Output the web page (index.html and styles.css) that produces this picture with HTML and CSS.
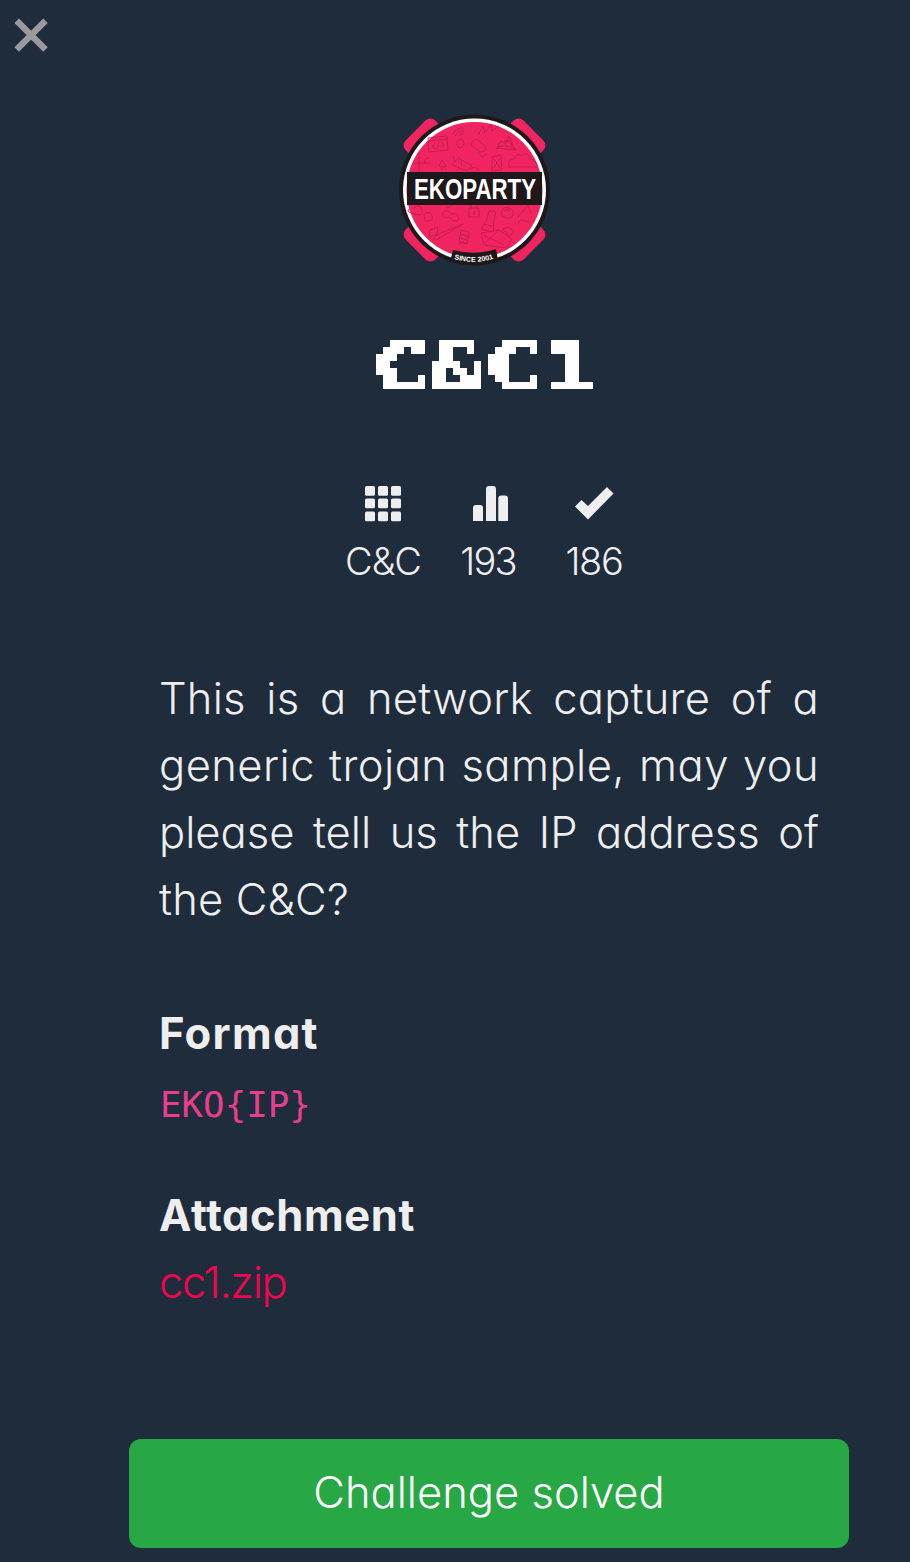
FILE: index.html
```html
<!DOCTYPE html>
<html lang="en">
<head>
<meta charset="utf-8">
<title>C&amp;C 1</title>
<link rel="stylesheet" href="styles.css">
</head>
<body>
<main class="page">
  <header class="topbar">
    <svg class="close" viewBox="0 0 36 36" width="36" height="36"><path d="M3.700 3.700 32.500 32.500M32.500 3.700 3.700 32.500" stroke="#9a999f" stroke-width="6.400" fill="none"/></svg>
  </header>
  <svg class="logo" viewBox="0 0 170 170" width="170" height="170">
    <g fill="#f0245e">
      <rect x="13" y="22" width="42" height="24" rx="7" transform="rotate(-45 34 34)"/>
      <rect x="114" y="22" width="42" height="24" rx="7" transform="rotate(45 135 34)"/>
      <rect x="13" y="124" width="42" height="24" rx="7" transform="rotate(45 34 136)"/>
      <rect x="114" y="124" width="42" height="24" rx="7" transform="rotate(-45 135 136)"/>
    </g>
    <circle cx="84.500" cy="85" r="75.500" fill="#1f181a"/>
    <circle cx="84.500" cy="85" r="71.500" fill="#fff"/>
    <circle cx="84.500" cy="85" r="68" fill="#f0245e"/>
    <g fill="none" stroke="#bd1c50" stroke-width=".8">
      <path d="M38 33 57 31 58 45 39 47ZM38 36 57 34M45 38l-3 3 4 3M51 37l3 3-3 3M49 37l-2 7M62 30q5-8 12-7M65 31q3-5 9-5M69 31q1-3 5-2M68 42q-3-5 1-7t5 3q-1 7-6 4M82 37q5-6 9 1 6 2 4 8-6 3-9-3-6-1-4-6M88 47l4 5 5-3M88 30l5-9 2 7 6-9 1 7 7-5"/>
      <path d="M107 43l4-7 4 3 4-8 6 14zM106 44q7-7 21 1M114 37q5-4 8 4M119 62q-2-7 5-8 2-6 8-4 6-4 8 4 6-1 7 8zM29 48v20M24 58h17M35 58q-1-5 4-5M49 61l3-6 4 7zM51 62l1 3M62 60l6-7 14 8-5 5zM65 57l-2-6M72 61l-1-6M80 65q4-5 9 0M102 52l9-2 1 15-10 1zM104 54l6 9M110 53l-6 10"/>
      <path d="M24 103q6-5 8 2t-8 4-4-5M34 109q6-4 8 2t-7 5zM52 108q5-5 9 1 7-2 8 5-5 5-9-2-7 2-8-4M79 103h10v9H79zM81 103q-1-7 3-7t3 7M84 106v4M99 106l-2 8-6 10 12 3 1-13 2-7zM94 119l8 2M111 108q1-7 8-5 7 3 3 9-7 4-11-4M114 106q3-3 6 0M128 119q2-6 7-3l5 2M128 112l10-12 3 8"/>
      <path d="M43 135q2-5 8-7l22-9-20 12q-7 5-10 4M40 125l8-3-1 7-8 3zM71 125l8 2-2 12-8-2zM70 129l8 2M69 133l8 2M68 140l6-4M91 128l18-3 13 9-6 9-22-3zM93 130l21 10M95 138l14-13M112 124l7-2 5 4-4 5zM57 103l9-5M97 99l12-2"/>
    </g>
    <path d="M17 67H152V100H17Z" fill="#1f181a"/>
    <text class="logo-name" x="24" y="94.300" textLength="122" lengthAdjust="spacingAndGlyphs">EKOPARTY</text>
    <path d="M63 145Q85 151 106 144L108 155Q84 164 61 153Z" fill="#1f181a"/>
    <path id="since-arc" d="M64 154Q85 160 106 153" fill="none"/>
    <text class="logo-since"><textPath href="#since-arc" textLength="40" lengthAdjust="spacingAndGlyphs">SINCE 2001</textPath></text>
    <!-- Samples the heading once per 7px cell for a bitmap look -->
    <filter id="pixelate" filterUnits="userSpaceOnUse" primitiveUnits="userSpaceOnUse" x="0" y="0" width="245" height="63" color-interpolation-filters="sRGB">
      <feFlood x="3" y="3" width="1" height="1" flood-color="#fff" result="dot"/>
      <feOffset in="dot" dx="0" dy="0" x="0" y="0" width="7" height="7" result="cell"/>
      <feTile in="cell" x="0" y="0" width="245" height="63" result="grid"/>
      <feComposite in="SourceGraphic" in2="grid" operator="in"/>
      <feComponentTransfer><feFuncA type="discrete" tableValues="0 1"/></feComponentTransfer>
      <feMorphology operator="dilate" radius="3"/>
    </filter>
  </svg>
  <h1 class="title"><span>C&amp;C1</span></h1>
  <section class="stats">
    <div class="stat category">
      <svg viewBox="0 0 40 40" width="40" height="40" fill="#eee"><g><rect x="2" y="3" width="10" height="9.700" rx="1.500"/><rect x="15" y="3" width="10" height="9.700" rx="1.500"/><rect x="28" y="3" width="10" height="9.700" rx="1.500"/><rect x="2" y="15.500" width="10" height="9.700" rx="1.500"/><rect x="15" y="15.500" width="10" height="9.700" rx="1.500"/><rect x="28" y="15.500" width="10" height="9.700" rx="1.500"/><rect x="2" y="28.500" width="10" height="9.700" rx="1.500"/><rect x="15" y="28.500" width="10" height="9.700" rx="1.500"/><rect x="28" y="28.500" width="10" height="9.700" rx="1.500"/></g></svg>
      <span>C&amp;C</span>
    </div>
    <div class="stat points">
      <svg viewBox="0 0 40 40" width="40" height="40" fill="#eee"><path d="M5 38V25q0-3 3-3h4q3 0 3 3V38ZM18 38V6q0-3 3-3h4q3 0 3 3V38ZM30.300 38V15.500q0-3 3-3h3.700q3 0 3 3V38Z"/></svg>
      <span>193</span>
    </div>
    <div class="stat solves">
      <svg viewBox="0 0 40 40" width="40" height="40" fill="#eee"><path d="M1 23.500 7.500 17l6.500 6 19-19 6.500 6.500L14 36.500Z"/></svg>
      <span>186</span>
    </div>
  </section>
  <section class="body">
    <p class="description"><span class="line l1">This is a network capture of a</span> <span class="line l2">generic trojan sample, may you</span> <span class="line l3">please tell us the IP address of</span> <span class="last">the C&amp;C?</span></p>
    <h2 class="label format">Format</h2>
    <code class="flag">EKO{IP}</code>
    <h2 class="label attachment">Attachment</h2>
    <a class="file">cc1.zip</a>
  </section>
  <div class="solved"><span>Challenge solved</span></div>
</main>
</body>
</html>
```
FILE: styles.css
```css
* { box-sizing: border-box; }
body { margin: 0; background: #1e2c3c; color: #eee; font-family: Inter, "Liberation Sans", sans-serif; font-weight: 300; font-feature-settings: "cv11" 1; }
.page { display: flex; flex-direction: column; height: 1562px; overflow: hidden; }
.topbar { height: 105px; padding: 17px 0 0 13px; }
.close { display: block; }
.logo { display: block; margin-left: 390px; flex: none; overflow: visible; }
.logo-name { font: bold 29.500px "Liberation Sans Narrow", "Liberation Sans", sans-serif; fill: #fff; }
.logo-since { font: bold 7px "Liberation Sans", sans-serif; fill: #fff; }
.title { margin: 58px 0 0 369px; width: 245px; height: 63px; font: bold 66px/67px "DejaVu Sans Mono", monospace; color: #fff; filter: url(#pixelate); }
.title span { display: block; width: 165px; margin-left: 2px; white-space: nowrap; transform: scaleX(1.42); transform-origin: left; -webkit-text-stroke: 1.500px #fff; }
.stats { display: flex; margin: 87px 0 0 346px; height: 110px; }
.stat { display: flex; flex-direction: column; align-items: center; font-size: 38px; line-height: 46px; gap: 15px; width: 74px; white-space: nowrap; }
.stat svg { display: block; flex: none; }
.points { margin-left: 33px; width: 70px; letter-spacing: -1.800px; }
.solves { margin-left: 35px; width: 72px; letter-spacing: -1.300px; }
.category span { letter-spacing: -1px; }
.body { display: flex; flex-direction: column; align-items: flex-start; margin: 72px 0 0 159px; width: 660px; font-size: 43.500px; line-height: 67px; }
.description { margin: 0; width: 660px; }
.line { display: block; text-align-last: justify; white-space: nowrap; }
.l1 { letter-spacing: .2px; }
.l2 { letter-spacing: .45px; }
.l3 { letter-spacing: 0; }
.last { letter-spacing: .2px; }
.label { margin: 0; font-size: 43.500px; line-height: 67px; font-weight: 700; }
.format { margin-top: 67px; letter-spacing: 1.300px; }
.flag { font: 35.800px/67px "DejaVu Sans Mono", monospace; color: #e83e8c; margin: 4px 0 0 1px; }
.attachment { margin-top: 44px; letter-spacing: .6px; }
.file { color: #f5054f; letter-spacing: -1.300px; }
.solved { display: flex; align-items: center; justify-content: center; margin: auto 61px 14px 129px; height: 109px; padding-bottom: 3px; flex: none; border-radius: 12px; background: #28a745; color: #fff; font-size: 43.500px; }
```
